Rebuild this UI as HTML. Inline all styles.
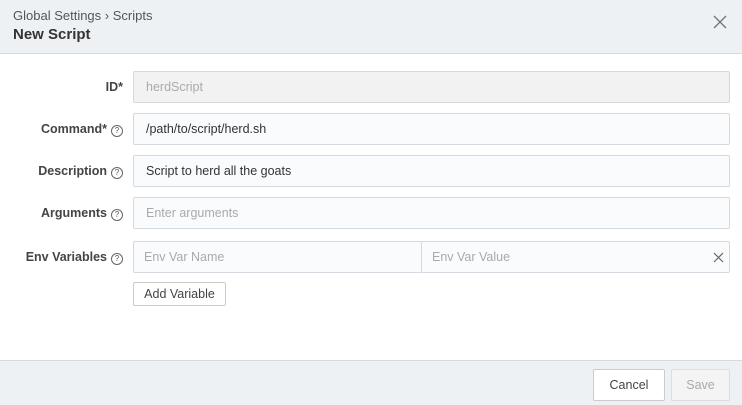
<!DOCTYPE html>
<html><head><style>
*{box-sizing:border-box;margin:0;padding:0}
body{width:742px;height:405px;font-family:"Liberation Sans",sans-serif;background:#fff;position:relative;overflow:hidden;color:#333}
.hdr{position:absolute;left:0;top:0;width:742px;height:54px;background:#eef1f4;border-bottom:1px solid #d5dade}
.crumb{position:absolute;left:13px;top:8px;font-size:13px;color:#555}
.title{position:absolute;left:13px;top:26px;font-size:15px;font-weight:bold;color:#333}
.close{position:absolute;left:713px;top:15px}
.lbl{position:absolute;right:619px;font-size:12.5px;font-weight:bold;color:#444;text-align:right;white-space:nowrap}
.q{display:inline-block;width:12px;height:12px;border:1px solid #666;border-radius:50%;font-size:8px;line-height:10px;text-align:center;font-weight:normal;margin-left:4px;vertical-align:0px;color:#555}
.inp{position:absolute;left:133px;width:597px;height:32px;border:1px solid #d3d9de;border-radius:2px;background:#f9fbfc;font-size:12.5px;padding:8px 12px;color:#333}
.ph{color:#aaa}
.btn{position:absolute;border:1px solid #ccc;background:#fff;border-radius:2px;font-size:12.5px;text-align:center}
.ftr{position:absolute;left:0;top:360px;width:742px;height:45px;background:#eef1f4;border-top:1px solid #d5dade}
</style></head><body>
<div class="hdr">
<div class="crumb">Global Settings › Scripts</div>
<div class="title">New Script</div>
<svg class="close" width="14" height="14" viewBox="0 0 14 14"><path d="M1 1L13 13M13 1L1 13" stroke="#777" stroke-width="1.4"/></svg>
</div>
<div class="lbl" style="top:80px">ID*</div>
<div class="inp" style="top:71px;background:#f2f2f2;color:#aaa">herdScript</div>
<div class="lbl" style="top:122px">Command*<span class="q">?</span></div>
<div class="inp" style="top:113px">/path/to/script/herd.sh</div>
<div class="lbl" style="top:164px">Description<span class="q">?</span></div>
<div class="inp" style="top:155px">Script to herd all the goats</div>
<div class="lbl" style="top:206px">Arguments<span class="q">?</span></div>
<div class="inp ph" style="top:197px">Enter arguments</div>
<div class="lbl" style="top:250px">Env Variables<span class="q">?</span></div>
<div class="inp ph" style="top:241px;width:289px;border-right:none;padding-left:10px">Env Var Name</div>
<div class="inp ph" style="top:241px;left:421px;width:309px;padding-left:10px">Env Var Value</div>
<svg style="position:absolute;left:713px;top:252px" width="11" height="11" viewBox="0 0 11 11"><path d="M1 1L10 10M10 1L1 10" stroke="#666" stroke-width="1.2"/></svg>
<div class="btn" style="left:133px;top:282px;width:93px;height:24px;line-height:22px;color:#444">Add Variable</div>
<div class="ftr"></div>
<div class="btn" style="left:593px;top:369px;width:72px;height:32px;line-height:30px;color:#444">Cancel</div>
<div class="btn" style="left:671px;top:369px;width:59px;height:32px;line-height:30px;color:#aaa;background:#f4f4f4;border-color:#ddd">Save</div>
</body></html>
